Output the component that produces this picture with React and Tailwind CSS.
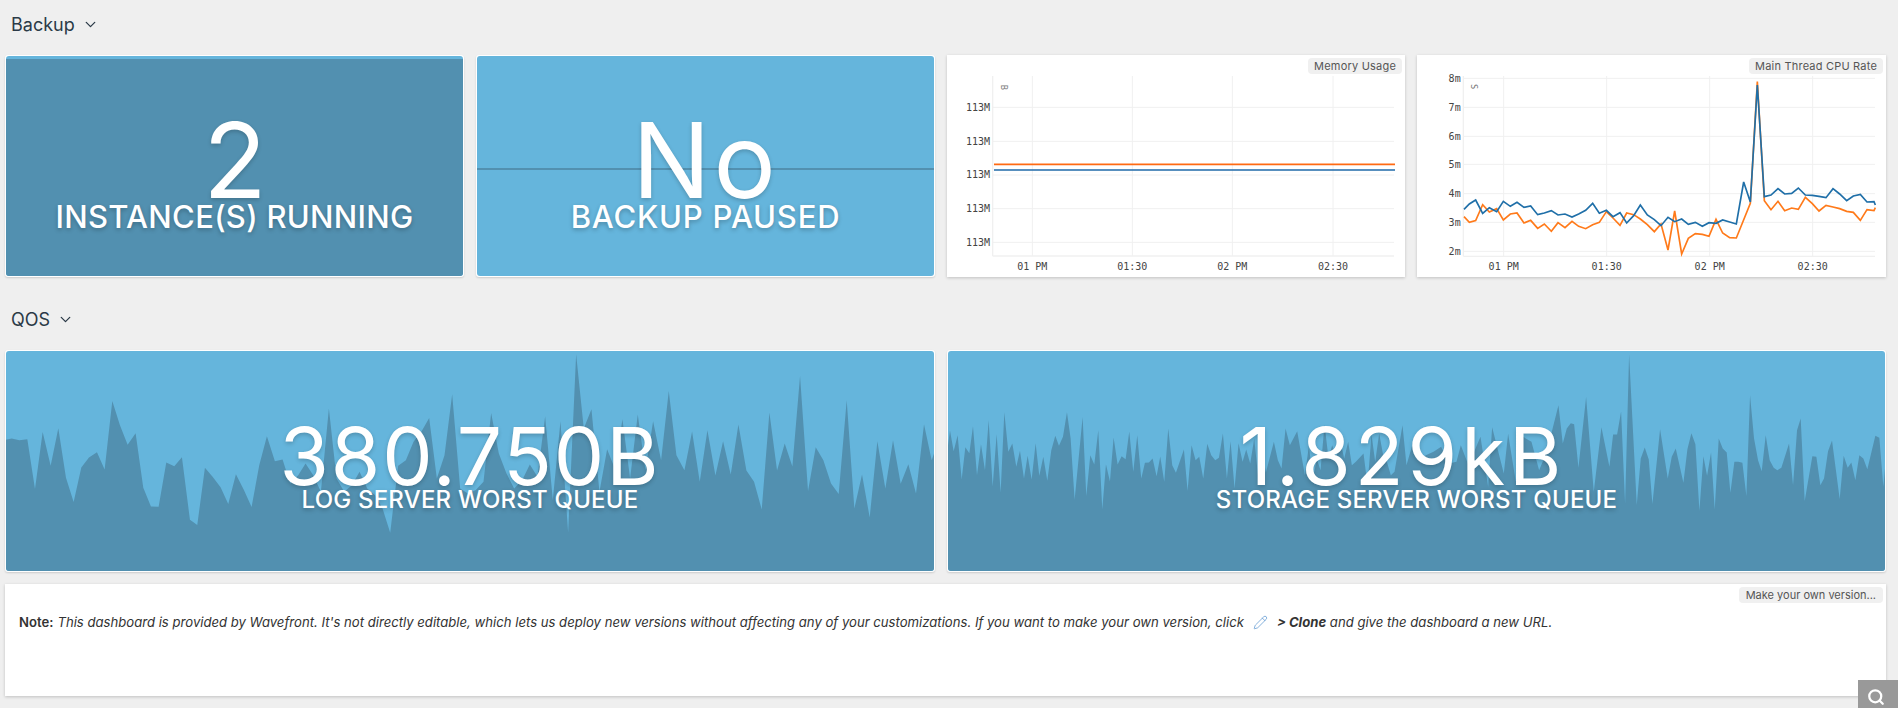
import { ChevronDown, Pencil, Search } from "lucide-react";

const DARK = "#5290b0";

// chart points are in 3x page units, read off the screenshot
const logQueue = "18,284 35,280 58,285 82,282 105,432 128,260 152,362 175,249 198,398 221,471 244,367 267,337 291,321 314,373 337,167 360,240 383,299 407,264 430,428 453,484 476,485 499,352 523,363 546,336 570,524 592,540 615,368 638,395 662,426 685,477 708,387 732,435 755,486 778,360 801,273 825,348 848,343 871,415 895,390 917,355 940,390 963,440 987,190 1010,400 1033,440 1056,420 1079,380 1102,430 1125,450 1148,490 1171,563 1195,362 1218,345 1241,290 1264,260 1288,218 1311,400 1334,330 1357,147 1381,430 1404,445 1428,435 1451,410 1474,203 1497,325 1520,385 1543,430 1567,405 1590,358 1613,395 1636,213 1659,465 1682,228 1705,562 1729,27 1752,250 1775,192 1799,440 1822,312 1845,370 1868,222 1891,400 1914,208 1937,375 1960,228 1984,345 2007,137 2030,330 2054,375 2077,259 2100,410 2123,255 2147,391 2170,288 2193,388 2216,238 2240,376 2263,410 2286,493 2309,202 2332,376 2355,295 2378,364 2401,92 2425,438 2448,306 2471,345 2494,415 2517,447 2541,165 2564,490 2587,388 2610,517 2633,288 2657,430 2680,285 2703,416 2726,357 2749,445 2773,237 2796,345 2803,325";

const storageQueueA = [[24,300],[30,256],[41,318],[53,270],[65,403],[76,306],[88,324],[99,243],[111,390],[123,297],[135,375],[146,225],[158,424],[170,267],[182,442],[193,201],[205,320],[217,295],[229,365],[240,317],[252,400],[263,332],[275,403],[287,294],[298,392],[310,335],[322,407],[334,315],[346,272],[357,302],[369,275],[381,201],[392,280],[404,464],[428,215],[439,453],[451,330],[463,358],[475,255],[487,493],[498,357],[510,409],[521,277],[533,358],[545,333],[557,342],[568,259],[580,380],[592,270],[604,400],[615,353],[627,352],[638,340],[650,393],[661,334],[673,410],[685,250],[697,360],[708,383],[732,313],[743,437],[755,300],[767,345],[778,335],[790,400],[802,296],[814,330],[826,345],[837,338],[849,265],[861,400],[872,288],[884,430],[896,294],[908,350],[919,313],[931,355],[943,280],[955,397],[966,310],[978,382],[1002,290],[1014,345],[1025,370],[1037,250],[1050,300],[1072,258],[1095,390],[1107,303],[1119,400],[1131,342],[1142,375],[1154,238],[1166,340],[1177,300],[1189,340],[1201,285],[1213,340],[1225,290],[1236,360],[1248,350],[1271,325],[1283,420],[1295,268],[1306,350],[1318,265],[1330,330],[1341,350],[1353,390],[1364,380],[1388,240],[1400,360],[1423,280],[1440,340]];
const storageQueueB = [[18,330],[41,320],[64,305],[87,355],[110,350],[123,300],[146,360],[182,275],[205,425],[217,246],[252,385],[265,266],[288,410],[310,275],[335,290],[358,375],[381,320],[416,180],[429,295],[441,250],[453,234],[463,237],[476,368],[499,155],[522,440],[545,246],[569,365],[580,268],[592,268],[604,199],[616,475],[628,27],[651,480],[663,340],[675,307],[687,343],[698,477],[721,252],[744,400],[756,335],[768,310],[791,413],[803,312],[815,264],[827,297],[839,497],[851,333],[862,392],[874,322],[885,493],[897,280],[909,310],[921,322],[932,443],[944,350],[956,350],[968,353],[980,453],[991,150],[1003,280],[1015,345],[1026,378],[1038,270],[1050,345],[1062,368],[1073,375],[1085,368],[1108,295],[1120,420],[1132,255],[1143,220],[1155,468],[1178,333],[1190,335],[1202,420],[1213,400],[1225,318],[1237,286],[1260,462],[1272,332],[1284,368],[1295,352],[1307,405],[1319,330],[1331,340],[1343,372],[1367,272],[1379,278],[1391,425],[1396,370]];
const storageQueue = [
  ...storageQueueA.map(([x, y]) => `${x + 2820},${y}`),
  ...storageQueueB.map(([x, y]) => `${x + 4260},${y}`),
].join(" ");

const cpuBlue = "162,508 178,492 197,480 218,520 238,503 260,515 280,484 301,499 321,487 342,502 362,498 383,524 403,519 424,512 444,525 465,522 486,531 506,522 527,511 548,490 568,520 589,511 609,530 630,518 650,549 671,527 691,495 712,525 733,539 753,557 774,532 794,545 815,537 835,553 856,547 877,559 897,548 918,550 938,540 959,546 979,552 1001,426 1021,486 1042,135 1063,470 1083,465 1104,446 1124,462 1145,460 1165,444 1186,465 1207,466 1227,469 1248,473 1269,446 1289,462 1310,482 1330,468 1351,463 1371,486 1392,485 1396,495";
const cpuOrange = "162,530 178,547 197,542 218,494 238,516 260,506 280,540 301,522 321,519 342,549 362,541 383,565 403,552 424,574 444,548 465,563 486,544 506,559 527,566 548,554 568,547 589,515 609,534 630,556 650,519 671,524 691,537 712,554 733,575 753,552 774,630 794,513 815,642 835,595 856,581 877,583 897,589 918,538 938,579 959,593 979,594 1021,490 1042,125 1063,482 1083,509 1104,484 1124,512 1145,504 1165,508 1186,472 1207,491 1227,513 1248,496 1269,501 1289,506 1310,514 1330,517 1351,541 1371,509 1392,512 1396,503";

function SectionTitle({ children, className }) {
  return (
    <div className={`flex items-center gap-[7px] pl-[6px] text-[18px] text-[#2b3a47] ${className}`}>
      {children}
      <ChevronDown size={17} strokeWidth={1.8} />
    </div>
  );
}

function Stat({ value, label, children, className = "", valueClass, labelClass }) {
  return (
    <div className={`bg-white p-px rounded-[3px] shadow-[0_1px_2px_rgba(0,0,0,0.15)] ${className}`}>
      <div className="relative h-full overflow-hidden rounded-[3px] bg-[#65b5dc] text-white flex flex-col items-center">
        {children}
        <div className={`relative font-normal [text-shadow:0_2px_4px_rgba(0,0,0,0.2)] ${valueClass}`}>
          {value}
        </div>
        <div className={`relative font-medium [text-shadow:0_2px_4px_rgba(0,0,0,0.25)] ${labelClass}`}>
          {label}
        </div>
      </div>
    </div>
  );
}

function AreaBg({ points, viewBox, left, right }) {
  return (
    <svg className="absolute inset-0 h-full w-full" viewBox={viewBox} preserveAspectRatio="none">
      <polygon points={`${left},678 ${points} ${right},678`} fill={DARK} />
    </svg>
  );
}

function ChartCard({ title, viewBox, className, children }) {
  return (
    <div className={`relative bg-white shadow-[0_1px_3px_rgba(0,0,0,0.2)] ${className}`}>
      <svg className="h-full w-full" viewBox={viewBox}>{children}</svg>
      <div className="absolute right-[3px] top-[3px] h-4 rounded-[4px] bg-[#f0f0f0] px-[6px] text-[11px] leading-4 tracking-[0.2px] text-[#555]">
        {title}
      </div>
    </div>
  );
}

function Ticks({ vx, hy, xLabels, yLabels, left, right, top, bottom, unit }) {
  const grid = "#f0f0f0";
  const mono = { fontFamily: "DejaVu Sans Mono, monospace", fontSize: 30, fill: "#444" };
  return (
    <>
      {vx.map((x) => <line key={x} x1={x} x2={x} y1={top} y2={bottom} stroke={grid} strokeWidth="3" />)}
      {hy.map((y) => <line key={y} x1={left} x2={right} y1={y} y2={y} stroke={grid} strokeWidth="3" />)}
      <line x1={left} x2={left} y1={top} y2={bottom} stroke={grid} strokeWidth="4" />
      <line x1={left} x2={right} y1={bottom} y2={bottom} stroke={grid} strokeWidth="4" />
      {hy.map((y, i) => (
        <text key={y} x={left - 8} y={y + 10} textAnchor="end" {...mono}>{yLabels[i]}</text>
      ))}
      {vx.map((x, i) => (
        <text key={x} x={x} y={689} textAnchor="middle" {...mono}>{xLabels[i]}</text>
      ))}
      <text
        x={left + 24}
        y={unit.y}
        textAnchor="middle"
        transform={`rotate(90 ${left + 24} ${unit.y})`}
        style={{ fontFamily: "DejaVu Sans Mono, monospace", fontSize: 26, fill: "#777" }}
      >
        {unit.text}
      </text>
    </>
  );
}

const times = ["01 PM", "01:30", "02 PM", "02:30"];

const backupValue = "mt-[62px] text-[104px] leading-[84px]";
const backupLabel = "text-[31px] leading-[30px]";
const qosValue = "mt-[73px] text-[80px] leading-[64px]";
const qosLabel = "text-[24px] leading-[24px] tracking-[0.2px]";

export default function App() {
  return (
    <div className="h-[708px] w-[1898px] overflow-hidden bg-[#efefef] pl-[5px] [font-family:Inter,sans-serif]">
      <SectionTitle className="h-[55px] pb-[6px]">Backup</SectionTitle>

      <div className="flex h-[222px] gap-3">
        <Stat value="2" label="INSTANCE(S) RUNNING" className="w-[459px]" valueClass={`${backupValue} tracking-[-1px]`} labelClass={`${backupLabel} tracking-[0.3px]`}>
          <div className="absolute inset-0 top-[3px] bg-[#5290b0]" />
        </Stat>
        <Stat value="No" label="BACKUP PAUSED" className="w-[459px]" valueClass={`${backupValue} tracking-[3px]`} labelClass={`${backupLabel} tracking-[0.8px]`}>
          <div className="absolute inset-x-0 top-[112px] h-[2px] bg-[#5290b0]" />
        </Stat>

        <ChartCard title="Memory Usage" viewBox="21 45 1374 666" className="w-[458px]">
          <Ticks
            vx={[277, 577, 877, 1179]}
            hy={[202, 304, 405, 506, 607]}
            xLabels={times}
            yLabels={["113M", "113M", "113M", "113M", "113M"]}
            left={158}
            right={1362}
            top={108}
            bottom={648}
            unit={{ text: "B", y: 142 }}
          />
          <line x1="162" x2="1365" y1="373" y2="373" stroke="#ff6a13" strokeWidth="5" />
          <line x1="162" x2="1365" y1="390" y2="390" stroke="#1f6aa8" strokeWidth="5" />
        </ChartCard>

        <ChartCard title="Main Thread CPU Rate" viewBox="21 45 1407 666" className="w-[469px]">
          <Ticks
            vx={[281, 590, 899, 1208]}
            hy={[115, 202, 289, 373, 461, 547, 634]}
            xLabels={times}
            yLabels={["8m", "7m", "6m", "5m", "4m", "3m", "2m"]}
            left={160}
            right={1395}
            top={108}
            bottom={649}
            unit={{ text: "S", y: 140 }}
          />
          <polyline points={cpuOrange} fill="none" stroke="#ff7a1a" strokeWidth="5" />
          <polyline points={cpuBlue} fill="none" stroke="#1f6fa8" strokeWidth="5" />
        </ChartCard>
      </div>

      <SectionTitle className="h-[73px] pt-[12px]">QOS</SectionTitle>

      <div className="flex h-[222px] gap-3">
        <Stat value="380.750B" label="LOG SERVER WORST QUEUE" className="w-[930px]" valueClass={`${qosValue} tracking-[2px]`} labelClass={qosLabel}>
          <AreaBg points={logQueue} viewBox="18 17 2785 661" left={18} right={2803} />
        </Stat>
        <Stat value="1.829kB" label="STORAGE SERVER WORST QUEUE" className="w-[939px]" valueClass={`${qosValue} mr-[28px] tracking-[4px]`} labelClass={qosLabel}>
          <AreaBg points={storageQueue} viewBox="2844 17 2812 661" left={2844} right={5656} />
        </Stat>
      </div>

      <div className="relative mt-3 h-[112px] w-[1881px] bg-white pl-[14px] pt-[27px] shadow-[0_1px_3px_rgba(0,0,0,0.2)]">
        <div className="absolute right-[3px] top-[3px] h-4 rounded-[4px] bg-[#f0f0f0] px-[7px] text-[11px] leading-4 text-[#555]">
          Make your own version...
        </div>
        <p className="flex items-center text-[13.13px] leading-[22px] text-[#333]">
          <b className="mr-[4px] font-semibold">Note:</b>
          <i>
            This dashboard is provided by Wavefront. It's not directly editable, which lets us deploy new versions without affecting any of your customizations. If you want to make your own version, click
          </i>
          <Pencil size={15} strokeWidth={1} className="mx-[9px] text-[#3f83c9]" />
          <i>
            <b>&gt; Clone</b> and give the dashboard a new URL.
          </i>
        </p>
      </div>

      <div className="absolute right-0 top-[680px] flex h-[28px] w-[40px] items-start justify-center bg-[#999] pr-[4px] pt-[8px] text-white">
        <Search size={18} strokeWidth={3} />
      </div>
    </div>
  );
}
